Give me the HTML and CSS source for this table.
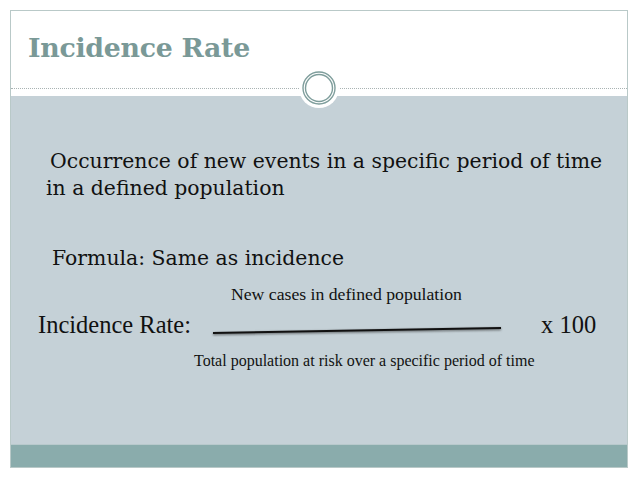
FILE: index.html
```html
<!DOCTYPE html>
<html>
<head>
<meta charset="utf-8">
<link rel="stylesheet" href="styles.css">
</head>
<body>
<div class="slide">
  <header class="head">
    <h1 class="title">Incidence Rate</h1>
  </header>
  <div class="rule"></div>
  <div class="knob">
    <svg width="40" height="40" viewBox="0 0 40 40">
      <circle cx="20" cy="20" r="20" fill="#ffffff"/>
      <circle cx="20" cy="20" r="16" fill="none" stroke="#7f9e9c" stroke-width="1.4"/>
      <circle cx="20" cy="20" r="13.5" fill="none" stroke="#7f9e9c" stroke-width="1.4"/>
    </svg>
  </div>
  <main class="content">
    <p class="lead">Occurrence of new events in a specific period of time in a defined population</p>
    <p class="formula">Formula: Same as incidence</p>
    <div class="fraction">
      <div class="num">New cases in defined population</div>
      <div class="eq">
        <span class="label">Incidence Rate:</span>
        <svg class="bar" width="292" height="12" viewBox="0 0 292 12">
          <defs>
            <filter id="sh" x="-5%" y="-100%" width="110%" height="300%">
              <feGaussianBlur stdDeviation="0.8"/>
            </filter>
          </defs>
          <line x1="2" y1="9" x2="290" y2="4" stroke="#6a6f72" stroke-width="2.5" filter="url(#sh)"/>
          <line x1="2" y1="8" x2="290" y2="3" stroke="#111111" stroke-width="2"/>
        </svg>
        <span class="mult">x 100</span>
      </div>
      <div class="den">Total population at risk over a specific period of time</div>
    </div>
  </main>
  <footer class="foot"></footer>
</div>
</body>
</html>
```

FILE: styles.css
```css
html, body {
  margin: 0;
  padding: 0;
  background: #ffffff;
}

.slide {
  position: relative;
  margin: 10px 0 0 10px;
  width: 616px;
  height: 456px;
  border: 1px solid #b9c9c8;
  display: flex;
  flex-direction: column;
  background: #ffffff;
}

.head {
  height: 77px;
  display: flex;
  align-items: center;
}

.title {
  margin: 0 0 0 17px;
  font-family: "DejaVu Serif", Georgia, serif;
  font-weight: bold;
  font-size: 26.8px;
  letter-spacing: -0.3px;
  color: #7a9997;
  position: relative;
  top: -2px;
}

.rule {
  height: 0;
  border-top: 1px dotted #a9b3b3;
}

.knob {
  position: absolute;
  left: 288px;
  top: 57px;
  width: 40px;
  height: 40px;
  z-index: 2;
}

.knob svg {
  display: block;
}

.content {
  margin-top: 7px;
  flex: 1;
  background: #c5d1d7;
  padding: 52px 0 0 0;
  color: #111111;
}

.lead {
  margin: 0 0 0 35px;
  width: 566px;
  text-indent: 4px;
  font-family: "DejaVu Serif", Georgia, serif;
  font-size: 20.4px;
  line-height: 27px;
}

.formula {
  margin: 43px 0 0 41px;
  font-family: "DejaVu Serif", Georgia, serif;
  font-size: 20.4px;
  line-height: 27px;
}

.fraction {
  font-family: "Liberation Serif", "Times New Roman", serif;
  margin-top: 12px;
}

.num {
  margin-left: 220px;
  font-size: 17.7px;
  line-height: 20px;
}

.eq {
  display: flex;
  align-items: center;
  margin-top: 6px;
  height: 30px;
}

.label {
  margin-left: 27px;
  font-size: 24.5px;
  width: 173px;
}

.bar {
  margin-top: 11px;
  display: block;
}

.mult {
  margin-left: 38px;
  font-size: 24.5px;
}

.den {
  margin: 12px 0 0 183px;
  font-size: 16px;
  line-height: 18px;
}

.foot {
  height: 22px;
  background: #8aacac;
  border-top: 1px solid #b8c9cc;
}
```
